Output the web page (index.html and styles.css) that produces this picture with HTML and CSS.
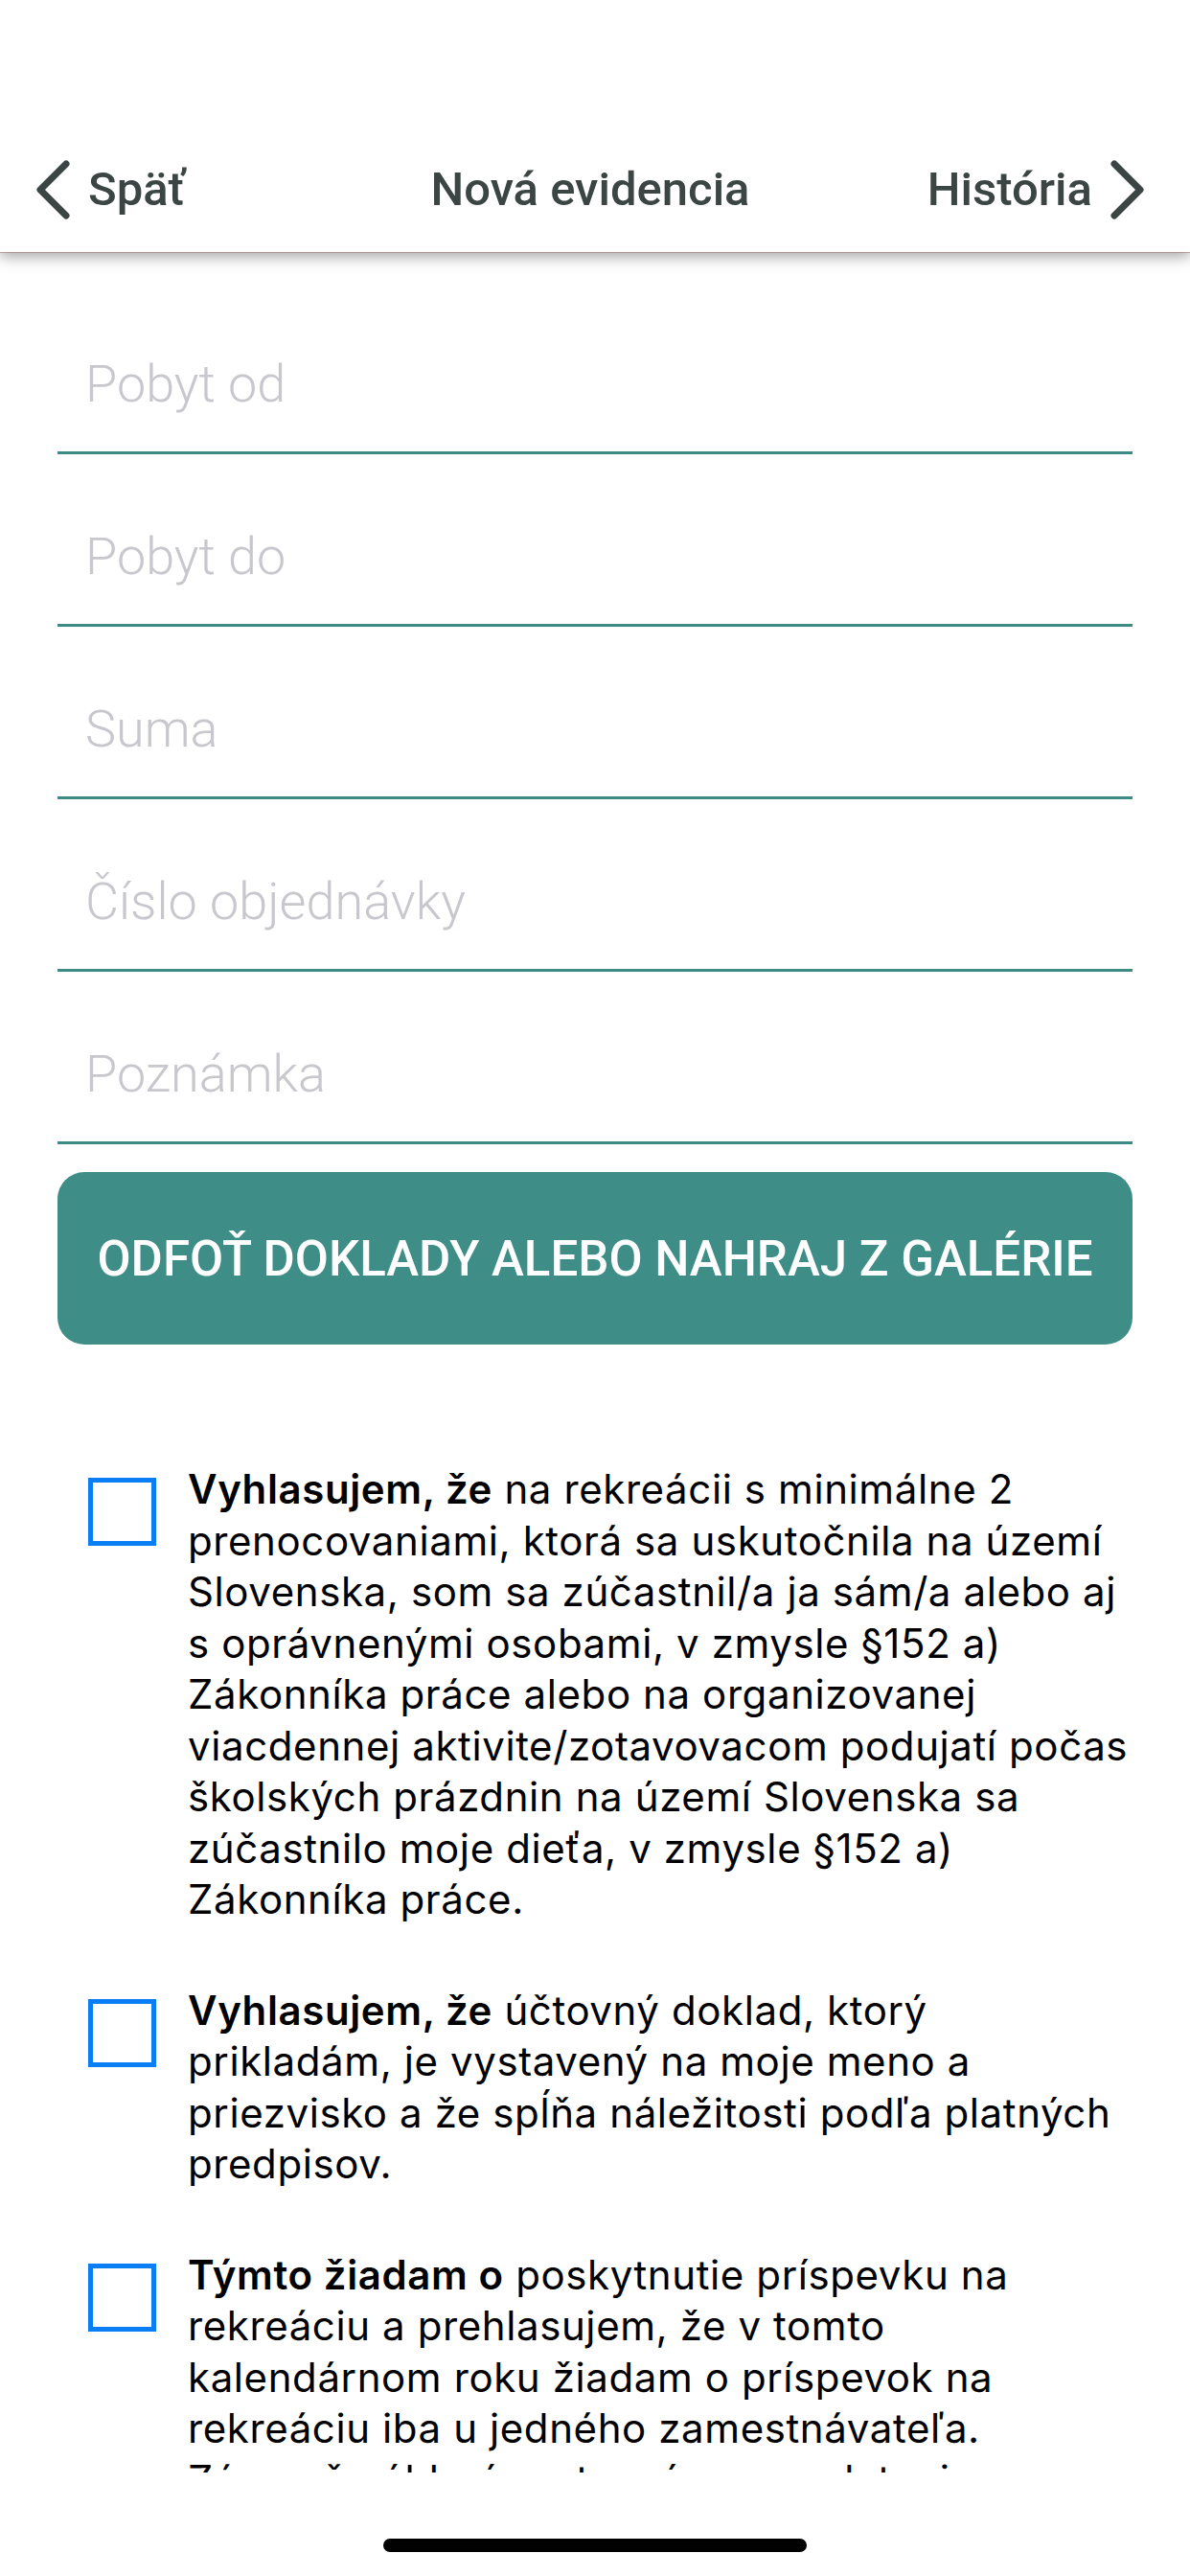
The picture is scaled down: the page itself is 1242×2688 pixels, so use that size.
FILE: index.html
```html
<!DOCTYPE html>
<html lang="sk">
    <head>
        <meta charset="UTF-8" />
        <meta name="viewport" content="width=device-width, initial-scale=1.0" />
        <title>Nová evidencia</title>

        <link rel="stylesheet" href="styles.css">
    </head>

    <body>
        <div class="screen">
            <header class="topbar">
                <div class="nav-row">
                    <a class="nav-link back">
                        <svg class="chevron" viewBox="0 0 40 64" width="40" height="64">
                            <path d="M33 5 L6 32 L33 59" />
                        </svg>
                        <span>Späť</span>
                    </a>
                    <p class="nav-title">Nová evidencia</p>
                    <a class="nav-link forward">
                        <span>História</span>
                        <svg class="chevron" viewBox="0 0 40 64" width="40" height="64">
                            <path d="M7 5 L34 32 L7 59" />
                        </svg>
                    </a>
                </div>
            </header>

            <main class="content">
                <div class="form">
                    <div class="field"><span class="placeholder">Pobyt od</span></div>
                    <div class="field"><span class="placeholder">Pobyt do</span></div>
                    <div class="field"><span class="placeholder">Suma</span></div>
                    <div class="field"><span class="placeholder">Číslo objednávky</span></div>
                    <div class="field"><span class="placeholder">Poznámka</span></div>

                    <button class="upload-btn">ODFOŤ DOKLADY ALEBO NAHRAJ Z GALÉRIE</button>
                </div>

                <div class="declarations">
                    <div class="declaration">
                        <span class="checkbox"></span>
                        <p class="declaration-text"><b>Vyhlasujem, že</b> na rekreácii s minimálne 2<br>prenocovaniami, ktorá sa uskutočnila na území<br>Slovenska, som sa zúčastnil/a ja sám/a alebo aj<br>s oprávnenými osobami, v zmysle §152 a)<br>Zákonníka práce alebo na organizovanej<br>viacdennej aktivite/zotavovacom podujatí počas<br>školských prázdnin na území Slovenska sa<br>zúčastnilo moje dieťa, v zmysle §152 a)<br>Zákonníka práce.</p>
                    </div>

                    <div class="declaration">
                        <span class="checkbox"></span>
                        <p class="declaration-text"><b>Vyhlasujem, že</b> účtovný doklad, ktorý<br>prikladám, je vystavený na moje meno a<br>priezvisko a že spĺňa náležitosti podľa platných<br>predpisov.</p>
                    </div>

                    <div class="declaration">
                        <span class="checkbox"></span>
                        <p class="declaration-text"><b>Týmto žiadam o</b> poskytnutie príspevku na<br>rekreáciu a prehlasujem, že v tomto<br>kalendárnom roku žiadam o príspevok na<br>rekreáciu iba u jedného zamestnávateľa.<br>Zároveň súhlasím s termínom vyplatenia<br>príspevku v najbližšom výplatnom termíne.</p>
                    </div>
                </div>
            </main>

            <footer class="home-area">
                <span class="home-indicator"></span>
            </footer>
        </div>
    </body>
</html>
```

FILE: styles.css
```css
/* Whole phone screen, 1242 x 2688 (3x of 414 x 896) */
body {
    margin: 0;
    background-color: #ffffff;
}
.screen {
    width: 1242px;
    height: 2688px;
    display: flex;
    flex-direction: column;
    overflow: hidden;
}

/* Top bar: 132px of empty status area, then the 131px nav row */
.topbar {
    position: relative;
    z-index: 1;
    padding-top: 132px;
    background-color: #ffffff;
    box-shadow: 0 1px 0 rgba(160, 110, 110, 0.55), 0 5px 14px rgba(0, 0, 0, 0.35);
}
.nav-row {
    height: 131px;
    display: grid;
    grid-template-columns: 1fr auto 1fr;
    align-items: center;
    padding: 0 46px 0 36px;
    font-family: Roboto, "Noto Sans", sans-serif;
    font-weight: 500;
    font-size: 49px;
    color: #3b4543;
}
.nav-link {
    display: flex;
    align-items: center;
    gap: 16px;
}
.back {
    justify-self: start;
}
.forward {
    justify-self: end;
}
.nav-title {
    margin: 0;
}
.chevron {
    display: block;
}
.chevron path {
    fill: none;
    stroke: #3b4543;
    stroke-width: 7;
    stroke-linecap: round;
    stroke-linejoin: round;
}

/* Scroll area, the last paragraph is cut at the bottom edge like in the app */
.content {
    height: 2317px;
    overflow: hidden;
}
.form {
    padding: 31px 60px 0;
    display: flex;
    flex-direction: column;
}
.field {
    height: 138px;
    border-bottom: 3px solid #3d8b84;
    display: flex;
    align-items: flex-end;
    padding: 0 0 39px 29px;
}
.placeholder {
    font-family: Roboto, "Noto Sans", sans-serif;
    font-weight: 300;
    font-size: 54px;
    line-height: 1.172;
    color: #c7c7cd;
}
.upload-btn {
    margin-top: 29px;
    height: 180px;
    border: none;
    border-radius: 28px;
    background-color: #3e8d86;
    color: #ffffff;
    font-family: Roboto, "Noto Sans", sans-serif;
    font-weight: 500;
    font-size: 51px;
    padding: 0;
}

/* Declarations with the blue checkboxes */
.declarations {
    padding: 124px 60px 0 92px;
    display: flex;
    flex-direction: column;
    gap: 62px;
}
.declaration {
    display: flex;
    align-items: flex-start;
    gap: 33px;
}
.checkbox {
    flex: none;
    width: 71px;
    height: 71px;
    box-sizing: border-box;
    border: 5px solid #0a7ff5;
    margin-top: 15px;
}
.declaration-text {
    margin: 0;
    font-family: Inter, "Noto Sans", sans-serif;
    font-size: 42px;
    line-height: 53.5px;
    letter-spacing: 0.6px;
    color: #000000;
    white-space: nowrap;
}
.declaration-text b {
    font-weight: 600;
}

.home-area {
    flex: 1;
    display: flex;
    justify-content: center;
    align-items: flex-start;
    padding-top: 69px;
}
.home-indicator {
    width: 442px;
    height: 14px;
    border-radius: 7px;
    background-color: #000000;
}
```
